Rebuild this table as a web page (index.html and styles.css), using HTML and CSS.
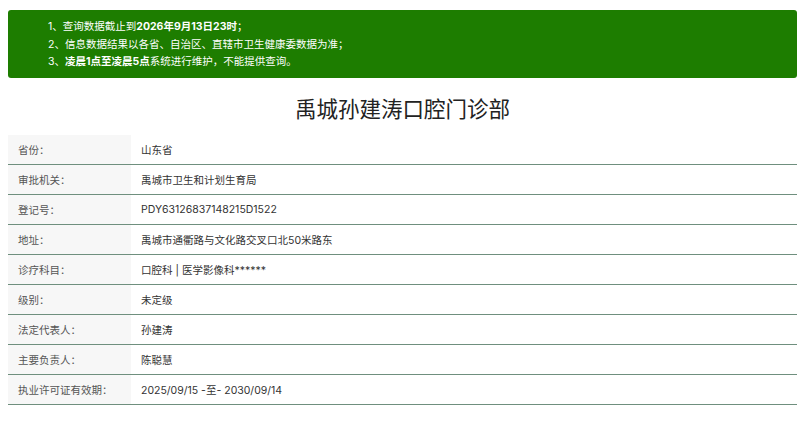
FILE: index.html
```html
<!DOCTYPE html>
<html lang="zh">
<head>
<meta charset="utf-8">
<title>禹城孙建涛口腔门诊部</title>
<link rel="stylesheet" href="styles.css">
</head>
<body>
<div class="notice">
  <p>1、查询数据截止到<b>2026年9月13日23时</b>；</p>
  <p>2、信息数据结果以各省、自治区、直辖市卫生健康委数据为准；</p>
  <p>3、<b>凌晨1点至凌晨5点</b>系统进行维护，不能提供查询。</p>
</div>
<h1 class="title">禹城孙建涛口腔门诊部</h1>
<table class="info">
  <tr><th>省份：</th><td>山东省</td></tr>
  <tr><th>审批机关：</th><td>禹城市卫生和计划生育局</td></tr>
  <tr><th>登记号：</th><td>PDY63126837148215D1522</td></tr>
  <tr><th>地址：</th><td>禹城市通衢路与文化路交叉口北50米路东</td></tr>
  <tr><th>诊疗科目：</th><td>口腔科 | 医学影像科******</td></tr>
  <tr><th>级别：</th><td>未定级</td></tr>
  <tr><th>法定代表人：</th><td>孙建涛</td></tr>
  <tr><th>主要负责人：</th><td>陈聪慧</td></tr>
  <tr><th>执业许可证有效期：</th><td>2025/09/15 -至- 2030/09/14</td></tr>
</table>
</body>
</html>
```
FILE: styles.css
```css
html, body {
  background: #fff;
}
body {
  margin: 8px 3px 8px 8px;
  font-family: Inter, "Noto Sans CJK SC", sans-serif;
  color: #333;
}
.notice {
  margin-top: 2px;
  background: #1d7d00;
  border-radius: 3px;
  padding: 8px 10px 7px 40px;
  color: #fff;
  font-size: 10.5px;
  line-height: 17.5px;
}
.notice p {
  margin: 0;
}
.notice b {
  font-weight: bold;
}
.title {
  margin: 16px 0 11px;
  text-align: center;
  font-size: 21.5px;
  line-height: 30px;
  font-weight: normal;
  color: #222;
}
.info {
  width: 100%;
  border-collapse: collapse;
  font-size: 10.5px;
}
.info th,
.info td {
  height: 29px;
  padding: 0 10px;
  text-align: left;
  border-bottom: 1px solid #6f8f7e;
  font-weight: normal;
}
.info th {
  width: 103px;
  background: #f7f7f7;
  color: #555;
}
.info td {
  color: #333;
}
```
